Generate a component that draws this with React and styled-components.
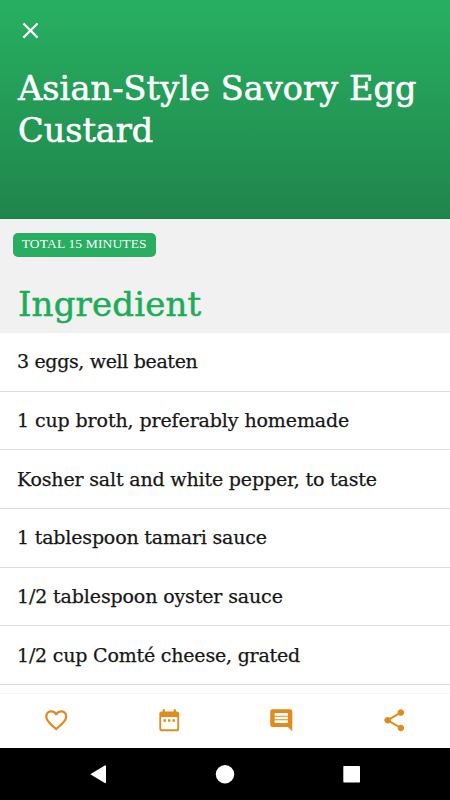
import React from 'react'
import styled, { createGlobalStyle } from 'styled-components';
import { MdClose, MdFavoriteBorder, MdShare } from 'react-icons/md';

const GlobalStyle = createGlobalStyle`
  * {
    box-sizing: border-box;
  }

  body {
    margin: 0;
    background: #fff;
  }
`;

const slab = `'DejaVu Serif', serif`;

const Screen = styled.div`
  display: flex;
  flex-direction: column;
  width: 450px;
  height: 800px;
  overflow: hidden;
  background: #fff;
  font-family: ${slab};
`;

const Header = styled.header`
  flex: none;
  height: 218.5px;
  padding: 17px 17px 0;
  background: linear-gradient(#27b062, #20854b);
  border-bottom: 1px solid #168044;
  color: #fff;
`;

const CloseButton = styled.button`
  display: flex;
  padding: 0;
  border: 0;
  background: none;
  color: inherit;
  font-size: 27px;
`;

const Title = styled.h1`
  margin: 24px 0 0 1px;
  font-size: 33.5px;
  font-weight: 400;
  line-height: 42px;
  -webkit-text-stroke: 0.6px currentColor;
`;

const TitleLine = styled.span`
  display: block;
  white-space: nowrap;
  letter-spacing: ${props => props.$spacing || 0}px;
`;

const Summary = styled.section`
  flex: none;
  height: 114.5px;
  padding: 14px 13px 0;
  background: #f1f1f1;
`;

const Badge = styled.div`
  display: flex;
  align-items: center;
  justify-content: center;
  width: 142.5px;
  height: 24px;
  padding-bottom: 1px;
  border-radius: 5px;
  background: #27ae60;
  color: #fff;
  font-family: 'Liberation Serif', serif;
  font-size: 13.5px;
  letter-spacing: 0.15px;
  white-space: nowrap;
`;

const SectionTitle = styled.h2`
  margin: 26px 0 0 5px;
  color: #1bad58;
  font-size: 34px;
  font-weight: 400;
  line-height: 42px;
  letter-spacing: 0.15px;
  -webkit-text-stroke: 0.5px currentColor;
`;

const IngredientList = styled.ul`
  flex: 1;
  min-height: 0;
  margin: 0;
  padding: 0;
  overflow: hidden;
  list-style: none;
`;

const Ingredient = styled.li`
  display: flex;
  align-items: center;
  height: 58.7px;
  padding: 0 0 1px 17px;
  border-bottom: 1px solid #dcdcdc;
  color: #161616;
  font-size: 19px;
  letter-spacing: ${props => props.$spacing || 0}px;
  white-space: nowrap;
  -webkit-text-stroke: 0.25px currentColor;
`;

const ActionBar = styled.nav`
  display: grid;
  flex: none;
  grid-template-columns: repeat(4, 1fr);
  height: 55px;
  border-top: 1px solid #f5f5f5;
`;

const Action = styled.button`
  display: flex;
  align-items: center;
  justify-content: center;
  padding: 0;
  border: 0;
  background: none;
  color: #e28a1b;
  font-size: 26.5px;
`;

const SystemBar = styled.footer`
  flex: none;
  height: 52.5px;
  background: #000;
`;

const SystemIcons = styled.svg`
  display: block;
  fill: #fff;
`;

const CalendarIcon = () => (
  <svg width="1em" height="1em" viewBox="0 0 24 24" fill="currentColor" fillRule="evenodd">
    <path d="M6 2h2v2h8V2h2v2h1a2 2 0 0 1 2 2v14a2 2 0 0 1-2 2H5a2 2 0 0 1-2-2V6a2 2 0 0 1 2-2h1ZM4.7 9v11.2h14.6V9Z" />
    <path d="M6.8 11.2H9.1v2.2H6.8ZM10.9 11.2h2.2v2.2h-2.2ZM14.9 11.2h2.3v2.2h-2.3Z" />
  </svg>
)

const CommentIcon = () => (
  <svg width="1em" height="1em" viewBox="0 0 24 24" fill="currentColor" fillRule="evenodd">
    <path d="M4 2h16a2 2 0 0 1 2 2v18l-4-4H4a2 2 0 0 1-2-2V4a2 2 0 0 1 2-2ZM6 5.4v2.5h12V5.4ZM6 8.8v2.3h12V8.8ZM6 12v2.6h12V12Z" />
  </svg>
)

const ingredients = [
  { text: '3 eggs, well beaten', spacing: -0.35 },
  { text: '1 cup broth, preferably homemade', spacing: -0.11 },
  { text: 'Kosher salt and white pepper, to taste', spacing: -0.17 },
  { text: '1 tablespoon tamari sauce', spacing: -0.18 },
  { text: '1/2 tablespoon oyster sauce', spacing: -0.13 },
  { text: '1/2 cup Comté cheese, grated', spacing: -0.2 },
];

const App = () => (
  <Screen>
    <GlobalStyle />
    <Header>
      <CloseButton aria-label="Close"><MdClose /></CloseButton>
      <Title>
        <TitleLine $spacing={0.1}>Asian-Style Savory Egg</TitleLine>
        <TitleLine>Custard</TitleLine>
      </Title>
    </Header>
    <Summary>
      <Badge>TOTAL 15 MINUTES</Badge>
      <SectionTitle>Ingredient</SectionTitle>
    </Summary>
    <IngredientList>
      {ingredients.map(({ text, spacing }) => (
        <Ingredient key={text} $spacing={spacing}>{text}</Ingredient>
      ))}
    </IngredientList>
    <ActionBar>
      <Action aria-label="Favorite"><MdFavoriteBorder /></Action>
      <Action aria-label="Schedule"><CalendarIcon /></Action>
      <Action aria-label="Comments"><CommentIcon /></Action>
      <Action aria-label="Share"><MdShare /></Action>
    </ActionBar>
    <SystemBar>
      <SystemIcons width="450" height="52" viewBox="0 0 450 52">
        <path d="M90.3 26.3 104.8 17.4Q106 17 106 18.3V34.3Q106 35.6 104.8 35.1Z" />
        <circle cx="225" cy="26.3" r="9.2" />
        <rect x="343.3" y="18" width="16.7" height="16.5" rx="0.8" />
      </SystemIcons>
    </SystemBar>
  </Screen>
)

export default App
